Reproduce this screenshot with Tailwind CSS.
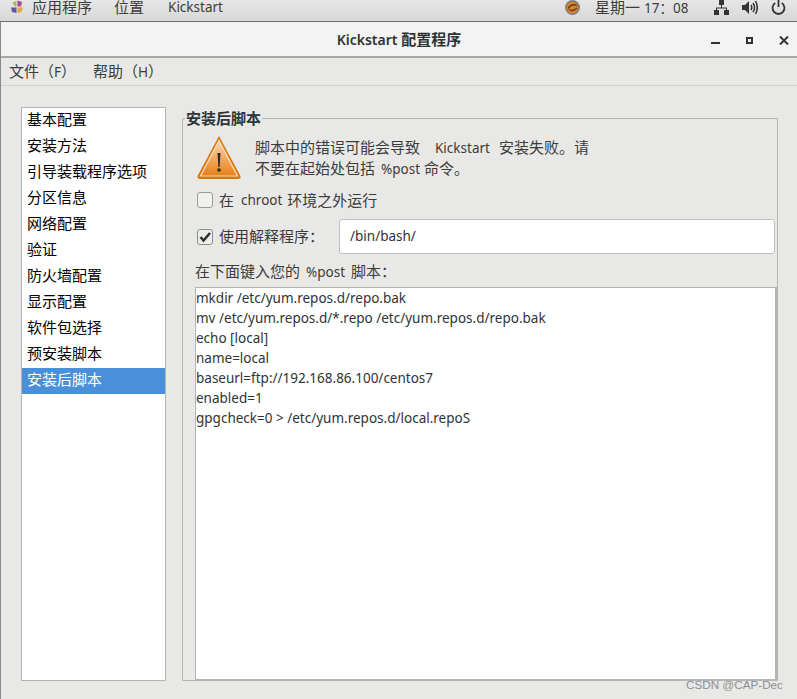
<!DOCTYPE html>
<html lang="zh-CN">
  <head>
    <meta charset="UTF-8" />
    <title>Kickstart 配置程序</title>
    <script src="https://cdn.jsdelivr.net/npm/@tailwindcss/browser@4"></script>
  </head>
  <body class="w-[797px] h-[699px] overflow-hidden bg-[#e8e8e7] text-[15px] text-[#2e3436] font-['Noto_Sans','Noto_Sans_CJK_SC',sans-serif]">
    <!-- top panel -->
    <div class="h-[22px] pb-[7px] flex items-center leading-[14px] bg-gradient-to-b from-[#e6e6e6] to-[#d8d8d8] border-b border-[#6e6e6e] text-[#3c3c3c]">
      <svg class="ml-[10px] w-[14px] h-[14px] shrink-0" viewBox="0 0 14 14">
        <path d="M6.500 1L2.500 2.500 5 6.500H6.500z" fill="#a6b84c" />
        <path d="M7.500 0.500L12 2 11 6.500H7.500z" fill="#a8488e" />
        <path d="M1 7.500H6.500V13L2 12z" fill="#6258a4" />
        <path d="M7.500 7.500H13L11.500 12 7.500 13z" fill="#eba63c" />
      </svg>
      <span class="ml-[8px] shrink-0">应用程序</span>
      <span class="ml-[22px] shrink-0">位置</span>
      <span class="ml-[24px] w-[55px] shrink-0 text-[13.5px]">Kickstart</span>
      <svg class="ml-[342px] w-[15px] h-[15px] shrink-0" viewBox="0 0 15 15">
        <circle cx="7.500" cy="7.500" r="7.500" fill="#8a8078" />
        <circle cx="7.500" cy="7.500" r="5.500" fill="#d9822b" />
        <path d="M3 8.500Q7 3 12 5.500M4 9.500Q8 12 12 8" stroke="#6a3c14" stroke-width="1.300" fill="none" />
      </svg>
      <span class="ml-[15px] w-[96px] shrink-0 whitespace-nowrap">星期一<span class="ml-[4px] text-[13.5px]">17<span class="font-['Noto_Sans_CJK_TC']">：</span>08</span></span>
      <svg class="ml-[23px] w-[15px] h-[15px] shrink-0" viewBox="0 0 15 15" fill="#333">
        <rect x="5" y="0" width="5" height="5" />
        <rect x="0" y="10" width="5" height="5" />
        <rect x="10" y="10" width="5" height="5" />
        <path d="M7 5h1v2.500h5V10h-1V8.500H3V10H2V7.500h5z" />
      </svg>
      <svg class="ml-[13px] w-[16px] h-[15px] shrink-0" viewBox="0 0 16 15" fill="#333">
        <path d="M0 5h3l4-4v13l-4-4H0z" />
        <path d="M9 5q1.500 2.500 0 5M11 3q3 4.500 0 9M13.500 1q3.500 6.500 0 13" stroke="#333" stroke-width="1.500" fill="none" />
      </svg>
      <svg class="ml-[13px] w-[15px] h-[15px] shrink-0" viewBox="0 0 15 15" fill="none" stroke="#333" stroke-width="1.800">
        <path d="M4.200 3a6 6 0 1 0 6.600 0M7.500 0v7" />
      </svg>
    </div>

    <div class="h-[699px] border-l border-[#8a8a8a]">
      <!-- title bar -->
      <div class="h-[36px] flex items-center justify-center relative bg-[#f3f3f3] border-b-2 border-[#a8a8a6]">
        <span class="font-semibold text-[#2e3436]"><span class="text-[14px]">Kickstart</span> 配置程序</span>
        <div class="absolute left-[710px] top-[20px] w-[9px] h-[2px] bg-[#2e3436]"></div>
        <div class="absolute left-[745px] top-[15px] w-[7px] h-[7px] border-2 border-[#2e3436]"></div>
        <svg class="absolute left-[778px] top-[14px] w-[10px] h-[9px]" viewBox="0 0 10 9" stroke="#2e3436" stroke-width="2">
          <path d="M1 0.500l8 8M9 0.500l-8 8" />
        </svg>
      </div>

      <!-- menu bar -->
      <div class="h-[28px] flex items-center border-b border-[#d2d2d0] pl-[8px] text-[#3c3c3c]">
        <span>文件（<span class="text-[13.5px]">F</span>）</span>
        <span class="ml-[17px]">帮助（<span class="text-[13.5px]">H</span>）</span>
      </div>

      <div class="flex items-start pl-[20px] pt-[21px]">
        <!-- sidebar -->
        <div class="w-[145px] h-[574px] shrink-0 bg-white border border-[#b4b4b2] text-black">
          <div class="h-[26px] leading-[23px] pl-[5px]">基本配置</div>
          <div class="h-[26px] leading-[23px] pl-[5px]">安装方法</div>
          <div class="h-[26px] leading-[23px] pl-[5px]">引导装载程序选项</div>
          <div class="h-[26px] leading-[23px] pl-[5px]">分区信息</div>
          <div class="h-[26px] leading-[23px] pl-[5px]">网络配置</div>
          <div class="h-[26px] leading-[23px] pl-[5px]">验证</div>
          <div class="h-[26px] leading-[23px] pl-[5px]">防火墙配置</div>
          <div class="h-[26px] leading-[23px] pl-[5px]">显示配置</div>
          <div class="h-[26px] leading-[23px] pl-[5px]">软件包选择</div>
          <div class="h-[26px] leading-[23px] pl-[5px]">预安装脚本</div>
          <div class="h-[26px] leading-[23px] pl-[5px] bg-[#4a90d9] text-white">安装后脚本</div>
        </div>

        <!-- group box -->
        <div class="relative ml-[16px] mt-[11px] w-[596px] h-[563px] shrink-0 border border-[#b4b4b2] rounded-tl-[2px] pl-[12px]">
          <span class="absolute left-[2px] top-[-11px] px-[1px] leading-[20px] bg-[#e8e8e7] font-bold text-[#2e3436]">安装后脚本</span>

          <div class="flex items-start pl-[2px] pt-[17px]">
            <svg class="w-[44px] h-[45px] shrink-0" viewBox="0 0 44 45">
              <defs>
                <linearGradient id="warn" x1="0" y1="0" x2="0" y2="1">
                  <stop offset="0" stop-color="#f9d3ac" />
                  <stop offset="0.55" stop-color="#f2a55a" />
                  <stop offset="1" stop-color="#e6801a" />
                </linearGradient>
              </defs>
              <path d="M22 0L43.500 40Q44 43 41 43H3Q0 43 0.500 40Z" fill="#d9780f" />
              <path d="M22 3L41.500 40.500H2.500Z" fill="#f8d8b8" />
              <path d="M22 6L39.500 39.500H4.500Z" fill="url(#warn)" />
              <path d="M20.500 17h3L22.600 31h-1.200z" fill="#2e2a26" />
              <circle cx="22" cy="34" r="1.800" fill="#2e2a26" />
            </svg>
            <p class="ml-[14px] mt-[1px] leading-[20px] text-[#3c3c3c] whitespace-nowrap">脚本中的错误可能会导致<span class="ml-[15px] text-[13.5px]">Kickstart</span><span class="ml-[9px]">安装失败。请</span><br />不要在起始处包括<span class="ml-[6px] text-[13.5px]">%post</span><span class="ml-[4px]">命令。</span></p>
          </div>

          <div class="flex items-center h-[20px] mt-[9px] pl-[2px] text-[#3c3c3c]">
            <div class="w-[16px] h-[16px] rounded-[3px] border border-[#9a9a98] bg-[#f1f1f0]"></div>
            <span class="ml-[6px]">在</span>
            <span class="ml-[7px] text-[13.5px]">chroot</span>
            <span class="ml-[5px]">环境之外运行</span>
          </div>

          <div class="flex items-center h-[35px] mt-[9px] pl-[2px] text-[#3c3c3c]">
            <div class="w-[16px] h-[16px] rounded-[3px] border border-[#8e8e8c] bg-[#ededec] flex items-center justify-center">
              <svg class="w-[12px] h-[12px]" viewBox="0 0 12 12" fill="none" stroke="#2e3436" stroke-width="2.600">
                <path d="M1.500 6l3 3.500L11 2" />
              </svg>
            </div>
            <span class="ml-[6px] w-[120px]">使用解释程序<span class="font-['Noto_Sans_CJK_TC']">：</span></span>
            <div class="w-[436px] h-[35px] bg-white border border-[#c0c0be] rounded-[3px] pl-[10px] leading-[33px] text-[13.5px] text-[#2e3436]">/bin/bash/</div>
          </div>

          <div class="h-[20px] mt-[7px] leading-[20px] text-[#3c3c3c] whitespace-nowrap">在下面键入您的<span class="ml-[6px] text-[13.5px]">%post</span><span class="ml-[6px]">脚本</span><span class="font-['Noto_Sans_CJK_TC']">：</span></div>

          <div class="w-[582px] h-[394px] mt-[6px] bg-white border border-[#b4b4b2] border-r-2 border-b-2 leading-[20px] text-[13.5px] text-[#2e3436] whitespace-pre">mkdir /etc/yum.repos.d/repo.bak
mv /etc/yum.repos.d/*.repo /etc/yum.repos.d/repo.bak
echo [local]
name=local
baseurl=ftp://192.168.86.100/centos7
enabled=1
gpgcheck=0 &gt; /etc/yum.repos.d/local.repoS</div>
        </div>
      </div>
    </div>

    <!-- watermark -->
    <div class="absolute left-[686px] top-[678px] text-[11.7px] leading-[14px] text-[#8f8f8f] font-['Liberation_Sans',sans-serif]">CSDN @CAP-Dec</div>
  </body>
</html>
